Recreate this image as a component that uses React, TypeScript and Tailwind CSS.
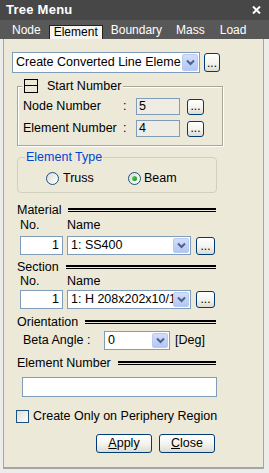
import type { ReactNode } from 'react'

function DotsButton({ className }: { className: string }) {
  return (
    <div
      className={`flex items-end justify-center rounded-[3px] border border-[#003c74] bg-linear-to-b from-white via-[#f5f4ef] to-[#dedcd2] pb-[2px] ${className}`}
    >
      <span className="text-[12px] leading-none">...</span>
    </div>
  )
}

function Combo({ value, className }: { value: string; className: string }) {
  return (
    <div className={`flex items-stretch border border-[#7f9db9] bg-white p-px ${className}`}>
      <span className="flex min-w-0 flex-1 items-center whitespace-nowrap pl-[2px]">{value}</span>
      <span className="flex w-[16px] shrink-0 items-center justify-center rounded-[2px] border border-[#b9c9ef] bg-linear-to-b from-[#d3defc] to-[#b2c6f6]">
        <svg width="9" height="7" viewBox="0 0 9 7">
          <path d="M1 1.5 L4.5 5 L8 1.5" stroke="#4d6185" strokeWidth="2" fill="none" />
        </svg>
      </span>
    </div>
  )
}

function Heading({ title, className }: { title: string; className: string }) {
  return (
    <div className={`ml-[13px] flex h-[14px] w-[199px] items-center gap-[7px] ${className}`}>
      <span className="leading-[14px]">{title}</span>
      <span className="h-[4px] flex-1 border-t-2 border-b border-black" />
    </div>
  )
}

function Radio({ checked }: { checked?: boolean }) {
  return (
    <span className="flex h-[13px] w-[13px] items-center justify-center rounded-full border border-[#1c5180] bg-linear-to-br from-[#dcdcd7] to-white">
      {checked && <span className="h-[5px] w-[5px] rounded-full bg-linear-to-br from-[#5fd95b] to-[#0a8f0a]" />}
    </span>
  )
}

function XpButton({ children }: { children: ReactNode }) {
  return (
    <div className="flex h-[19px] w-[56px] items-center justify-center rounded-[3px] border border-[#003c74] bg-linear-to-b from-white via-[#f5f4ef] to-[#dedcd2] leading-none">
      {children}
    </div>
  )
}

function NumberRow({ label, value, className }: { label: string; value: string; className: string }) {
  return (
    <div className={`flex h-[17px] items-center ${className}`}>
      <span className="w-[100px] leading-[17px]">{label}</span>
      <span className="w-[13px]">:</span>
      <span className="flex h-[17px] w-[44px] items-center border border-[#7f9db9] bg-[#efede3] pl-[2px]">{value}</span>
      <DotsButton className="ml-[7px] h-[16px] w-[17px]" />
    </div>
  )
}

export default function App() {
  return (
    <div className="flex h-[473px] w-[269px] flex-col bg-[#ececea] font-['Liberation_Sans',Arial,sans-serif] text-[12.5px] text-black">
      <div className="flex h-[20px] items-center justify-between bg-[#474747] pl-[6px] pr-[8px]">
        <span className="text-[13px] font-bold tracking-[0.25px] text-white">Tree Menu</span>
        <svg width="9" height="8" viewBox="0 0 9 8">
          <path d="M1 0.5 L8 7.5 M8 0.5 L1 7.5" stroke="white" strokeWidth="2" />
        </svg>
      </div>

      <div className="flex h-[19px] items-end bg-[#585858] text-[12px] text-white">
        <span className="mb-[2px] ml-[12px] leading-[14px]">Node</span>
        <span className="ml-[8px] h-[14px] border border-b-0 border-[#222] bg-[#f6f5f0] px-[4px] leading-[13px] text-black">
          Element
        </span>
        <span className="mb-[2px] ml-[8px] leading-[14px]">Boundary</span>
        <span className="mb-[2px] ml-[14px] leading-[14px]">Mass</span>
        <span className="mb-[2px] ml-[15px] leading-[14px]">Load</span>
      </div>

      <div className="ml-[3px] flex h-[430px] w-[261px] flex-col border-x border-b-2 border-[#a5a5a5] bg-[#ece9d8]">
        <div className="ml-[8px] mt-[13px] flex items-center gap-[4px]">
          <Combo value="Create Converted Line Eleme" className="h-[21px] w-[188px]" />
          <DotsButton className="h-[19px] w-[16px]" />
        </div>

        <div className="relative ml-[13px] mt-[13px] h-[60px] w-[206px] border border-[#a8a698] pl-[5px] pt-[11px] shadow-[1px_1px_0_#fff,inset_1px_1px_0_#fff]">
          <div className="absolute -top-[8px] left-[4px] flex h-[14px] items-center gap-[9px] bg-[#ece9d8] px-[2px]">
            <span className="relative h-[14px] w-[14px] border border-black">
              <span className="absolute left-0 right-0 top-[5px] h-px bg-black" />
            </span>
            <span className="leading-[14px]">Start Number</span>
          </div>
          <NumberRow label="Node Number" value="5" className="" />
          <NumberRow label="Element Number" value="4" className="mt-[5px]" />
        </div>

        <div className="relative ml-[13px] mt-[11px] h-[36px] w-[200px] rounded-[4px] border border-[#d0d0bf] pl-[28px] pt-[14px]">
          <span className="absolute -top-[8px] left-[7px] bg-[#ece9d8] px-[1px] leading-[14px] text-[#0046d5]">
            Element Type
          </span>
          <div className="flex h-[13px] items-center">
            <span className="flex w-[82px] items-center gap-[4px]">
              <Radio />
              <span className="leading-[13px]">Truss</span>
            </span>
            <span className="flex items-center gap-[3px]">
              <Radio checked />
              <span className="leading-[13px]">Beam</span>
            </span>
          </div>
        </div>

        <Heading title="Material" className="mt-[10px]" />
        <div className="ml-[16px] mt-px flex h-[14px] leading-[14px]">
          <span className="w-[47px]">No.</span>
          <span>Name</span>
        </div>
        <div className="ml-[16px] mt-[4px] flex h-[19px] items-center">
          <span className="flex h-[19px] w-[43px] items-center justify-end border border-[#7f9db9] bg-white pr-[3px]">1</span>
          <Combo value="1: SS400" className="ml-[4px] h-[19px] w-[124px]" />
          <DotsButton className="ml-[5px] h-[18px] w-[19px]" />
        </div>

        <Heading title="Section" className="mt-[5px]" />
        <div className="ml-[16px] flex h-[14px] leading-[14px]">
          <span className="w-[47px]">No.</span>
          <span>Name</span>
        </div>
        <div className="ml-[16px] mt-[2px] flex h-[19px] items-center">
          <span className="flex h-[19px] w-[43px] items-center justify-end border border-[#7f9db9] bg-white pr-[3px]">1</span>
          <Combo value="1: H 208x202x10/1" className="ml-[4px] h-[19px] w-[124px]" />
          <DotsButton className="ml-[5px] h-[17px] w-[19px]" />
        </div>

        <Heading title="Orientation" className="mt-[6px]" />
        <div className="ml-[19px] mt-[2px] flex h-[19px] items-center">
          <span className="w-[81px]">Beta Angle :</span>
          <Combo value="0" className="h-[19px] w-[66px]" />
          <span className="ml-[5px]">[Deg]</span>
        </div>

        <Heading title="Element Number" className="mt-[6px]" />
        <div className="ml-[18px] mt-[7px] h-[20px] w-[195px] border border-[#7f9db9] bg-white" />

        <div className="ml-[12px] mt-[13px] flex h-[13px] items-center gap-[4px]">
          <span className="h-[13px] w-[13px] border border-[#1c5180] bg-linear-to-br from-[#dcdcd7] to-white" />
          <span className="leading-[13px]">Create Only on Periphery Region</span>
        </div>

        <div className="ml-[92px] mt-[11px] flex gap-[7px]">
          <XpButton>
            <span>
              <span className="underline">A</span>pply
            </span>
          </XpButton>
          <XpButton>
            <span>
              <span className="underline">C</span>lose
            </span>
          </XpButton>
        </div>
      </div>
    </div>
  )
}
